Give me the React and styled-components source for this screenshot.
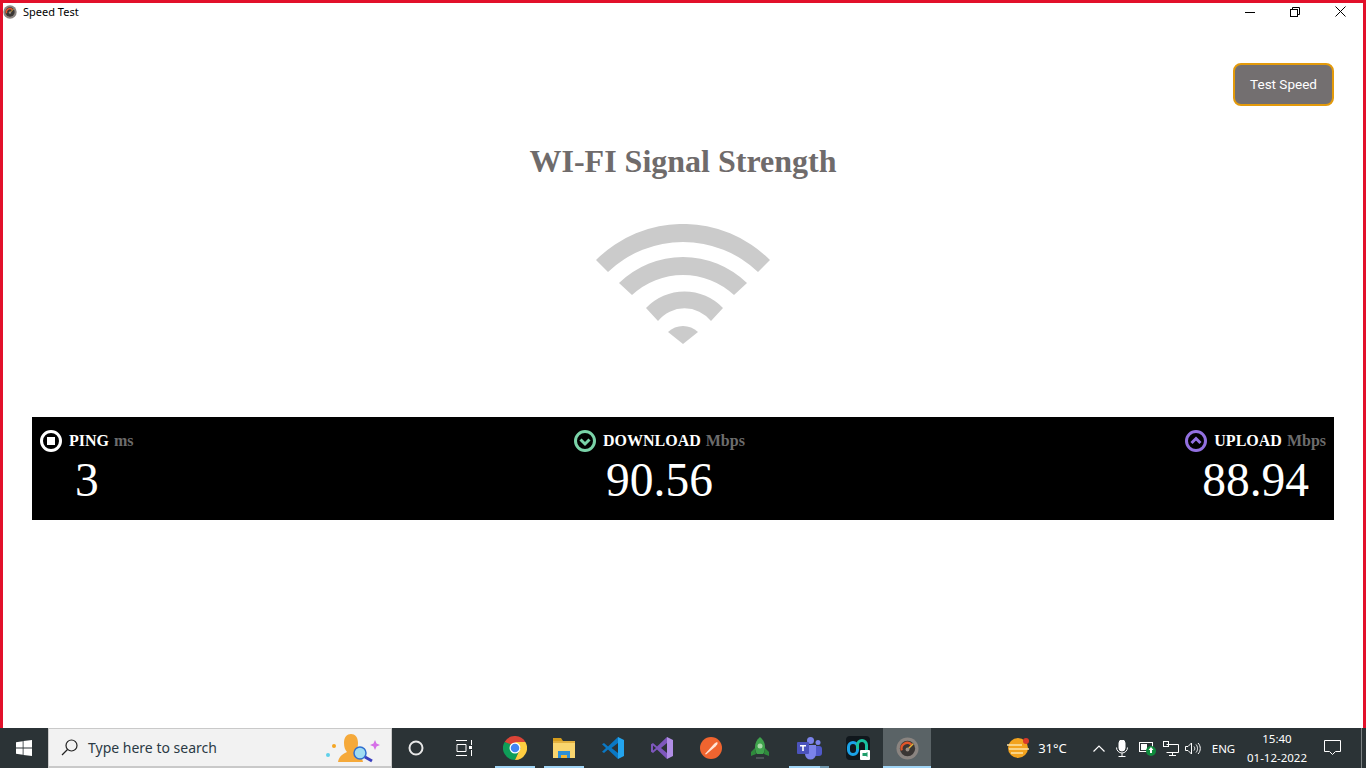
import React from "react";
import styled, { createGlobalStyle } from "styled-components";

const Global = createGlobalStyle`
  html, body { margin: 0; padding: 0; height: 100%; background: #fff; overflow: hidden; }
  #root { height: 100%; }
  * { box-sizing: border-box; }
`;
const Page = styled.div`display: flex; flex-direction: column; height: 768px; width: 1366px;`;
const Window = styled.div`flex: 1; display: flex; flex-direction: column; border: 3px solid #e2102a; border-bottom: 0; background: #fff; min-height: 0;`;
const TitleBar = styled.div`display: flex; align-items: center; height: 17px; flex: none;`;
const AppIconSlot = styled.div`display: flex; margin: 0 6px 0 0; width: 14px; height: 14px;`;
const AppTitle = styled.span`font: 11px/17px "Noto Sans", sans-serif; color: #000; flex: 1;`;
const WinButton = styled.div`width: ${p => p.$w}px; height: 17px; display: flex; align-items: center; justify-content: center; color: #000;`;
const Main = styled.main`flex: 1; display: flex; flex-direction: column; align-items: center; padding: 43px 29px 0;`;
const ActionRow = styled.div`align-self: stretch; display: flex; justify-content: flex-end;`;
const TestButton = styled.button`width: 101px; height: 43px; border: 2px solid #e39a0b; border-radius: 8px; background: #736f70; color: #fff; font: 13.5px Roboto, sans-serif; padding: 0 0 1px;`;
const Heading = styled.h1`margin: 38px 0 46px; font: bold 32px/34px "Liberation Serif", serif; color: #6f6b6b;`;
const WifiSvg = styled.svg`display: block; width: 174px; height: 120px; fill: #cbcbcb;`;
const MetricBar = styled.section`align-self: stretch; margin-top: 73px; height: 103px; background: #000; display: flex; justify-content: space-between; padding: 13px 8px 0;`;
const Metric = styled.div`display: flex; flex-direction: column; align-items: center;`;
const MetricHead = styled.div`display: flex; align-items: center; gap: 7px; height: 22px;`;
const MetricLabel = styled.span`font: bold 16px/22px "Liberation Serif", serif; color: #fff; white-space: pre;`;
const MetricUnit = styled.span`color: #6c6c6c; margin-left: 1px;`;
const MetricValue = styled.div`font: 47.5px/56px "Liberation Serif", serif; color: #fff;`;
const Taskbar = styled.footer`flex: none; height: 40px; display: flex; align-items: stretch; background: #2b3336;`;
const StartButton = styled.div`width: 48px; display: flex; align-items: center; justify-content: center;`;
const SearchBox = styled.div`width: 344px; display: flex; align-items: center; background: #f2f2f2; border: 1px solid #c9c9c9; border-bottom-width: 2px; padding: 0 10px 0 12px;`;
const SearchText = styled.span`flex: 1; margin-left: 10px; font: 14px "Noto Sans", sans-serif; color: #2b3a45;`;
const TaskGroup = styled.div`display: flex; gap: ${p => p.$gap}px; margin-left: ${p => p.$left}px;`;
const TaskButton = styled.div`position: relative; width: 48px; height: 40px; display: flex; align-items: center; justify-content: center; background: ${p => (p.$active ? "#5a6366" : "transparent")};
  &::after { content: ""; display: ${p => (p.$open ? "block" : "none")}; position: absolute; left: ${p => (p.$inset ? 4 : 0)}px; right: ${p => (p.$inset ? 4 : 0)}px; bottom: 0; height: 2px;
    background: ${p => (p.$stacked ? "linear-gradient(to right, #9fd4f5 77%, #6f97ad 77%)" : "#9fd4f5")}; }`;
const Tray = styled.div`margin-left: auto; display: flex; align-items: center; color: #fff; font: 13px "Noto Sans", sans-serif; height: 40px;`;
const TraySlot = styled.div`width: ${p => p.$w}px; margin-left: ${p => p.$ml || 0}px; height: 40px; display: flex; align-items: center; justify-content: center; color: #fff; flex: none; font-size: ${p => p.$fs || 13}px;`;
const Clock = styled.div`width: 70px; text-align: center; font: 11.5px/19px "Noto Sans", sans-serif; color: #fff; white-space: nowrap;`;
const EdgeLine = styled.div`width: 1px; height: 40px; background: #7c8284; margin: 0 4px 0 9px;`;

const Gauge = ({ s = 14 }) => (
  <svg width={s} height={s} viewBox="0 0 24 24">
    <circle cx="12" cy="12" r="11.5" fill="#8a8480" />
    <circle cx="12" cy="12" r="8" fill="#3a3634" />
    <path d="M6 14a6 6 0 0 1 10-6" stroke="#e0562a" strokeWidth="2.4" fill="none" />
    <path d="M12 13l6-6" stroke="#e8b33a" strokeWidth="1.5" />
    <circle cx="12" cy="13" r="2" fill="#9a8f85" />
  </svg>
);
const Wifi = () => (
  <WifiSvg viewBox="596 224 174 120">
    <path d="M596 260A123 123 0 0 1 770 260L758 272A108.75 108.75 0 0 0 608 272Z" />
    <path d="M619 283A91.8 91.8 0 0 1 747 283L734 295A75 75 0 0 0 632 295Z" />
    <path d="M646 308A53 53 0 0 1 723 308L711 321A34 34 0 0 0 658 321Z" />
    <path d="M668 332A21.75 21.75 0 0 1 698 332L683 344Z" />
  </WifiSvg>
);
const MetricIcon = ({ color, kind }) => (
  <svg width="22" height="22" viewBox="0 0 22 22" fill="none">
    <circle cx="11" cy="11" r="9.5" stroke={color} strokeWidth="3" />
    {kind === "stop" && <rect x="7" y="7" width="8" height="8" fill={color} />}
    {kind === "down" && <path d="M6.500 9.500L11 14l4.500-4.500" stroke={color} strokeWidth="3" />}
    {kind === "up" && <path d="M6.500 13L11 8.500l4.500 4.500" stroke={color} strokeWidth="3" />}
  </svg>
);
const metrics = [
  { icon: "stop", color: "#fff", label: "PING", unit: "ms", value: "3" },
  { icon: "down", color: "#7ad3a8", label: "DOWNLOAD", unit: "Mbps", value: "90.56" },
  { icon: "up", color: "#9270e0", label: "UPLOAD", unit: "Mbps", value: "88.94" },
];

const icons = {
  cortana: <svg width="16" height="16" viewBox="0 0 16 16" fill="none"><circle cx="8" cy="8" r="6.500" stroke="#e8e8e8" strokeWidth="2" /></svg>,
  taskview: <svg width="16" height="16" viewBox="0 0 16 16" fill="none" stroke="#fff"><path d="M0 .5h11M0 15.500h11M1 4.500h9v7H1zM15.500 0v5M15.500 10v6" /><rect x="13" y="6" width="3" height="3" fill="#fff" stroke="none" /></svg>,
  chrome: (
    <svg width="24" height="24" viewBox="0 0 48 48">
      <path d="M24 24L44.800 12A24 24 0 0 0 3.200 12Z" fill="#db4437" />
      <path d="M3.200 12A24 24 0 0 0 24 48L35 24Z" fill="#0f9d58" />
      <path d="M44.800 12H24L35 24L24 48A24 24 0 0 0 44.800 12Z" fill="#ffcd40" />
      <circle cx="24" cy="24" r="11" fill="#fff" />
      <circle cx="24" cy="24" r="8.500" fill="#4285f4" />
    </svg>
  ),
  folder: (
    <svg width="22" height="20" viewBox="0 0 22 20">
      <path d="M0 0h8l2 3H0z" fill="#d69d1d" />
      <rect y="3" width="22" height="17" fill="#f9d56e" />
      <rect y="3" width="22" height="2" fill="#e3b13f" />
      <path d="M5 20v-7h12v7h-3v-3H8v3z" fill="#2d8fd6" />
      <rect x="8" y="17" width="6" height="3" fill="#f2b530" />
    </svg>
  ),
  vscode: (
    <svg width="24" height="24" viewBox="0 0 24 24">
      <path d="M17 1L7 10.500 3 7 1 8.200 5 12 1 15.800 3 17l4-3.500L17 23l2-8V9z" fill="#0a78c4" />
      <path d="M17 7l-6.500 5 6.500 5z" fill="#2b3336" />
      <path d="M17 1l6 3v16l-6 3z" fill="#23a4ee" />
    </svg>
  ),
  vs: (
    <svg width="24" height="24" viewBox="0 0 24 24">
      <path d="M17 1L7 10.500 3 7 1 8.200V15.800L3 17l4-3.500L17 23l2-8V9z" fill="#7e57bd" />
      <path d="M17 7l-6 5 6 5z" fill="#2b3336" />
      <path d="M3 9.500L6 12l-3 2.500z" fill="#2b3336" />
      <path d="M17 1l6 3v16l-6 3z" fill="#b18ee6" />
    </svg>
  ),
  swift: (
    <svg width="22" height="22" viewBox="0 0 22 22">
      <circle cx="11" cy="11" r="11" fill="#f0642f" />
      <path d="M5 17L14 7c1.500-1.500 3-2 3.500-1.500S17 8 15.500 9.500L6 17.500z" fill="#ffe4d6" />
    </svg>
  ),
  rocket: (
    <svg width="20" height="24" viewBox="0 0 20 24">
      <path d="M10 1c3.500 3 5 6 5 10 0 3-1 6-2 7H7c-1-1-2-4-2-7 0-4 1.500-7 5-10z" fill="#3fa34d" />
      <circle cx="10" cy="10" r="2.500" fill="#a8d8a8" />
      <path d="M5 12l-4 4v4l5-2zM15 12l4 4v4l-5-2z" fill="#2f8a3c" />
      <rect x="6" y="21" width="8" height="2" fill="#4b5356" />
    </svg>
  ),
  teams: (
    <svg width="25" height="24" viewBox="0 0 25 24">
      <circle cx="21" cy="6.500" r="2.500" fill="#7b83eb" />
      <rect x="16" y="10" width="9" height="10" rx="3" fill="#5059c9" />
      <circle cx="13.500" cy="4.500" r="3.500" fill="#7b83eb" />
      <path d="M8 9h11v9a5.500 5.500 0 0 1-11 0z" fill="#7b83eb" />
      <rect y="6" width="12" height="12" rx="1" fill="#4b53bc" />
      <path d="M3 9h6v1.500H6.800V15H5.200v-4.500H3z" fill="#fff" />
    </svg>
  ),
  webex: (
    <svg width="24" height="24" viewBox="0 0 24 24" fill="none">
      <rect width="24" height="24" rx="4" fill="#10171c" />
      <rect x="2.500" y="6.500" width="9" height="12" rx="4.500" stroke="#1aa3e8" strokeWidth="3" />
      <path d="M11.500 13V9a4.500 4.500 0 0 1 9 0v5" stroke="#18c2a0" strokeWidth="3" />
      <rect x="14" y="14" width="10" height="10" rx="1" fill="#fff" />
      <path d="M16.500 17h3.500l1.500-1v5l-1.500-1h-3.500z" fill="#1f9d6b" />
    </svg>
  ),
  speed: <Gauge s={23} />,
};
const taskApps = [
  { id: "chrome", open: true, inset: true },
  { id: "folder", open: true, inset: true },
  { id: "vscode" },
  { id: "vs" },
  { id: "swift" },
  { id: "rocket" },
  { id: "teams", open: true, inset: true, stacked: true },
  { id: "webex" },
  { id: "speed", open: true, active: true },
];

export default function App() {
  return (
    <Page>
      <Global />
      <Window>
        <TitleBar>
          <AppIconSlot><Gauge /></AppIconSlot>
          <AppTitle>Speed Test</AppTitle>
          <WinButton $w={45}>
            <svg width="10" height="10" viewBox="0 0 10 10"><path d="M0 5.500h10" stroke="#000" /></svg>
          </WinButton>
          <WinButton $w={46}>
            <svg width="10" height="10" viewBox="0 0 10 10" fill="none" stroke="#000"><rect x=".5" y="2.500" width="7" height="7" /><path d="M2.500 2.500V.5h7v7h-2" /></svg>
          </WinButton>
          <WinButton $w={45}>
            <svg width="11" height="11" viewBox="0 0 11 11" stroke="#000"><path d="M.5.5l10 10M10.500.5l-10 10" /></svg>
          </WinButton>
        </TitleBar>
        <Main>
          <ActionRow><TestButton>Test Speed</TestButton></ActionRow>
          <Heading>WI-FI Signal Strength</Heading>
          <Wifi />
          <MetricBar>
            {metrics.map(m => (
              <Metric key={m.label}>
                <MetricHead>
                  <MetricIcon kind={m.icon} color={m.color} />
                  <MetricLabel>{m.label} <MetricUnit>{m.unit}</MetricUnit></MetricLabel>
                </MetricHead>
                <MetricValue>{m.value}</MetricValue>
              </Metric>
            ))}
          </MetricBar>
        </Main>
      </Window>
      <Taskbar>
        <StartButton>
          <svg width="16" height="16" viewBox="0 0 16 16" fill="#fff"><path d="M0 2.300l6.700-1v6.300H0zM7.500 1.100L16 0v7.600H7.500zM0 8.400h6.700v6.300l-6.700-1zM7.500 8.400H16V16l-8.500-1.100z" /></svg>
        </StartButton>
        <SearchBox>
          <svg width="17" height="17" viewBox="0 0 17 17" fill="none" stroke="#222" strokeWidth="1.200"><circle cx="10.500" cy="6.500" r="5.500" /><path d="M6.500 10.500L1 16" /></svg>
          <SearchText>Type here to search</SearchText>
          <svg width="56" height="32" viewBox="0 0 56 32">
            <circle cx="3" cy="23" r="2" fill="#5fd0ea" />
            <circle cx="9" cy="14" r="2" fill="#f5a623" />
            <path d="M50 8l1.500 3.500L55 13l-3.500 1.500L50 18l-1.500-3.500L45 13l3.500-1.500z" fill="#d66fe8" />
            <path d="M13 30c1-6 5-8 9-10-2-2-3-5-3-9 0-6 3-9 7-9s7 3 7 9c0 4-1 7-3 9 3 1 7 4 8 10z" fill="#f5a93a" />
            <circle cx="35" cy="21" r="6" fill="#9fdcf2" stroke="#2f6fd0" strokeWidth="1.500" />
            <path d="M40 25l7 4" stroke="#3a3fc0" strokeWidth="3" />
          </svg>
        </SearchBox>
        <TaskGroup $gap={0} $left={0}>
          <TaskButton>{icons.cortana}</TaskButton>
          <TaskButton>{icons.taskview}</TaskButton>
        </TaskGroup>
        <TaskGroup $gap={1} $left={3}>
          {taskApps.map(a => (
            <TaskButton key={a.id} $open={a.open} $active={a.active} $inset={a.inset} $stacked={a.stacked}>{icons[a.id]}</TaskButton>
          ))}
        </TaskGroup>
        <Tray>
          <TraySlot $w={24}>
            <svg width="24" height="22" viewBox="0 0 24 22">
              <circle cx="12" cy="11" r="10" fill="#f2a31f" />
              <circle cx="20" cy="4" r="3" fill="#d8392b" />
              <path d="M1 8h15M3 12h20M5 16h12" stroke="#fbe3a8" strokeWidth="1.500" />
            </svg>
          </TraySlot>
          <TraySlot $w={33} $ml={6}>31°C</TraySlot>
          <TraySlot $w={20} $ml={20}>
            <svg width="12" height="7" viewBox="0 0 12 7" fill="none" stroke="#fff" strokeWidth="1.200"><path d="M.5 6.500L6 1l5.500 5.500" /></svg>
          </TraySlot>
          <TraySlot $w={26}>
            <svg width="12" height="17" viewBox="0 0 12 17" fill="none" stroke="#fff"><rect x="3" y="0" width="6" height="11" rx="3" fill="#fff" /><path d="M.5 7.500a5.500 5.500 0 0 0 11 0M6 13v3M2.500 16.500h7" /></svg>
          </TraySlot>
          <TraySlot $w={26}>
            <svg width="18" height="16" viewBox="0 0 18 16">
              <rect x=".5" y="2.500" width="13" height="9" fill="none" stroke="#fff" />
              <rect x="2" y="4" width="6" height="6" fill="#fff" />
              <circle cx="12" cy="11" r="5" fill="#0f8a3c" />
              <path d="M12 7l2.500 3h-1.500v3h-2v-3H9.500z" fill="#fff" />
            </svg>
          </TraySlot>
          <TraySlot $w={20}>
            <svg width="16" height="15" viewBox="0 0 16 15" fill="none" stroke="#fff"><path d="M3.500 3.500H15.500V11.500H3.500M9.500 11.500v3M6 14.500h7" /><rect x=".5" y=".5" width="5" height="5" /></svg>
          </TraySlot>
          <TraySlot $w={24}>
            <svg width="16" height="13" viewBox="0 0 16 13" fill="none" stroke="#fff"><path d="M.5 4.500h2.500L6.500 1v11L3 8.500H.5zM9 4.500c1 1 1 3 0 4M11 2.500c2 2 2 6 0 8M13 1c3 3 3 8 0 11" /></svg>
          </TraySlot>
          <TraySlot $w={37} $fs={11.5}>ENG</TraySlot>
          <Clock>15:40<br />01-12-2022</Clock>
          <TraySlot $w={40}>
            <svg width="17" height="16" viewBox="0 0 17 16" fill="none" stroke="#fff"><path d="M.5.5h16v11h-5l-3 3-3-3h-5z" /></svg>
          </TraySlot>
          <EdgeLine />
        </Tray>
      </Taskbar>
    </Page>
  );
}
